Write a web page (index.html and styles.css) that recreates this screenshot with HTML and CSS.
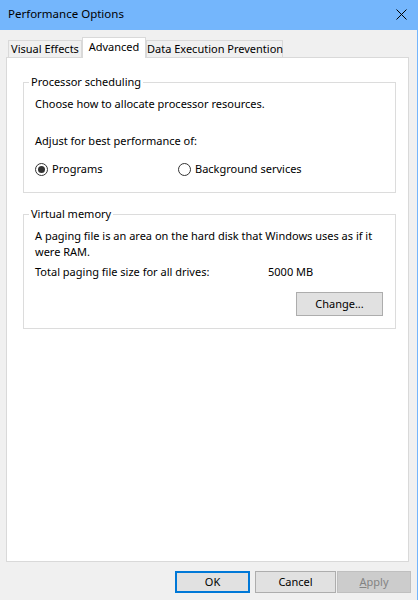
FILE: index.html
```
<!DOCTYPE html>
<html>
<head>
<meta charset="utf-8">
<link rel="stylesheet" href="styles.css">
</head>
<body>
<div class="window">
  <div class="titlebar">
    <span class="title">Performance Options</span>
    <svg class="close" width="11" height="11" viewBox="0 0 11 11"><path d="M0.5 0.5 L10.5 10.5 M10.5 0.5 L0.5 10.5" stroke="#000" stroke-width="1" fill="none"/></svg>
  </div>
  <div class="body">
    <div class="tabs">
      <div class="tab tab-ve">Visual Effects</div>
      <div class="tab tab-adv active">Advanced</div>
      <div class="tab tab-dep">Data Execution Prevention</div>
    </div>
    <div class="panel">
      <fieldset class="group">
        <legend>Processor scheduling</legend>
        <p class="line">Choose how to allocate processor resources.</p>
        <p class="line adjust">Adjust for best performance of:</p>
        <div class="radios">
          <label class="radio radio-programs"><span class="circle checked"></span>Programs</label>
          <label class="radio"><span class="circle"></span>Background services</label>
        </div>
      </fieldset>
      <fieldset class="group vm">
        <legend>Virtual memory</legend>
        <p class="line">A paging file is an area on the hard disk that Windows uses as if it were RAM.</p>
        <div class="total"><span class="total-label">Total paging file size for all drives:</span><span>5000 MB</span></div>
        <div class="change-row"><button class="btn change">Change...</button></div>
      </fieldset>
    </div>
    <div class="buttons">
      <button class="btn ok">OK</button>
      <button class="btn cancel">Cancel</button>
      <button class="btn apply" disabled><u>A</u>pply</button>
    </div>
  </div>
</div>
</body>
</html>
```
FILE: styles.css
```
html, body {
  margin: 0;
  padding: 0;
}
body {
  font-family: "Noto Sans", "Liberation Sans", sans-serif;
  font-size: 11px;
  line-height: 16px;
  color: #000;
  background: #f0f0f0;
}
.window {
  width: 417px;
  height: 600px;
  border-right: 1px solid #74b5fc;
  display: flex;
  flex-direction: column;
  background: #f0f0f0;
}
.titlebar {
  height: 30px;
  flex: none;
  background: #74b6fc;
  display: flex;
  align-items: center;
  justify-content: space-between;
  padding: 0 10px 0 8px;
}
.title {
  font-size: 11.5px;
  margin-top: -2px;
}
.close {
  display: block;
  margin-top: -2px;
}
.body {
  flex: 1;
  display: flex;
  flex-direction: column;
  padding: 7px 8px 0 6px;
}
.tabs {
  display: flex;
  align-items: flex-end;
  padding-left: 2px;
  height: 20px;
}
.tab {
  box-sizing: border-box;
  height: 17px;
  border: 1px solid #d9d9d9;
  border-bottom: none;
  background: #f0f0f0;
  text-align: center;
  line-height: 16px;
  white-space: nowrap;
}
.tab-ve { width: 74px; }
.tab-adv { width: 64px; }
.tab-dep { width: 137px; }
.tab.active {
  height: 21px;
  background: #fff;
  margin-bottom: -1px;
  position: relative;
  z-index: 1;
  padding-top: 1px;
}
.panel {
  flex: 1;
  background: #fff;
  border: 1px solid #d9d9d9;
  padding: 16px 12px 0 16px;
}
.group {
  margin: 0;
  border: 1px solid #dcdcdc;
  padding: 6px 12px 15px 11px;
}
.group legend {
  padding: 0 2px;
  margin-left: -6px;
}
.line {
  margin: 0;
}
.adjust {
  margin-top: 21px;
}
.radios {
  display: flex;
  margin-top: 12px;
  height: 16px;
  align-items: center;
}
.radio {
  display: flex;
  align-items: center;
  gap: 4px;
}
.radio-programs {
  width: 143px;
}
.circle {
  box-sizing: border-box;
  width: 13px;
  height: 13px;
  border: 1px solid #333;
  border-radius: 50%;
  background: #fff;
  display: flex;
  align-items: center;
  justify-content: center;
}
.circle.checked::after {
  content: "";
  width: 7px;
  height: 7px;
  border-radius: 50%;
  background: #333;
}
.vm {
  margin-top: 13px;
  padding-bottom: 12px;
}
.total {
  display: flex;
  margin-top: 4px;
}
.total-label {
  width: 233px;
}
.change-row {
  display: flex;
  justify-content: flex-end;
  margin-top: 12px;
}
.btn {
  box-sizing: border-box;
  font-family: inherit;
  font-size: 11px;
  line-height: 16px;
  color: #000;
  background: #e1e1e1;
  border: 1px solid #adadad;
  padding: 0;
  margin: 0;
}
.change {
  width: 87px;
  height: 24px;
}
.buttons {
  height: 38px;
  flex: none;
  display: flex;
  justify-content: flex-end;
  align-items: flex-start;
  padding-top: 9px;
  box-sizing: border-box;
}
.ok {
  width: 75px;
  height: 22px;
  border: 2px solid #0078d7;
}
.cancel {
  width: 81px;
  height: 22px;
  margin-left: 5px;
}
.apply {
  width: 74px;
  height: 22px;
  margin-left: 1px;
  margin-right: -2px;
  background: #cccccc;
  border-color: #bfbfbf;
  color: #838383;
}
```
